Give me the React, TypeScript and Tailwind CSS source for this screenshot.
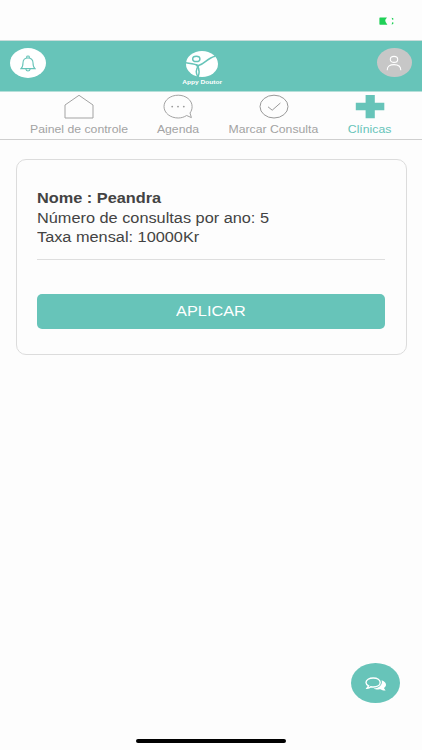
import React from "react";

const HomeIcon = () => (
    <svg width="30" height="26" viewBox="0 0 30 26" fill="none" stroke="#a3a3a3" strokeWidth="1">
        <path d="M1 11 L15 1.3 L29 11 V24 H1 Z"/>
    </svg>
);

const AgendaIcon = () => (
    <svg width="30" height="26" viewBox="0 0 30 26" fill="none" stroke="#a3a3a3" strokeWidth="1">
        <path d="M27 19 C28.4 17.1 29.1 15 29.1 12.5 C29.1 6.2 22.9 1.2 15.2 1.2 C7.3 1.2 1 6.2 1 12.5 C1 19 7.3 24 15.2 24 C18.4 24 21.3 23 23.6 21.5 L28.4 23.6 Z"/>
        <g fill="#999999" stroke="none">
            <circle cx="9.2" cy="12.6" r="0.9"/>
            <circle cx="15" cy="12.6" r="0.9"/>
            <circle cx="20.8" cy="12.6" r="0.9"/>
        </g>
    </svg>
);

const CheckIcon = () => (
    <svg width="30" height="26" viewBox="0 0 30 26" fill="none" stroke="#999999" strokeWidth="1">
        <ellipse cx="15" cy="12.6" rx="14" ry="11.4"/>
        <path d="M9 12.8 L13.2 16.2 L21.4 9"/>
    </svg>
);

const CrossIcon = () => (
    <svg width="30" height="26" viewBox="0 0 30 26" fill="#67c4b9">
        <path d="M10.6 1 H19.8 V8.8 H29.3 V16.2 H19.8 V24.2 H10.6 V16.2 H0.8 V8.8 H10.6 Z"/>
    </svg>
);

const navItems = [
    {title: "Painel de controle", icon: <HomeIcon/>, width: "w-[98px]", color: "text-[#a3a3a3]"},
    {title: "Agenda", icon: <AgendaIcon/>, width: "w-[42px]", color: "text-[#a3a3a3]"},
    {title: "Marcar Consulta", icon: <CheckIcon/>, width: "w-[90px]", color: "text-[#a3a3a3]"},
    {title: "Clínicas", icon: <CrossIcon/>, width: "w-[43px]", color: "text-[#67c4b9]"},
];

const Logo = () => (
    <div className="flex flex-col items-center pt-[10px] mr-[19px]">
        <svg width="32" height="26" viewBox="0 0 32 26" fill="none">
            <ellipse cx="16" cy="13" rx="16" ry="13" fill="#fff"/>
            <g stroke="#67c4b9" strokeWidth="1.5">
                <ellipse cx="10.3" cy="7.9" rx="3.6" ry="2.6"/>
                <path d="M0 11.8 C5 12.6 9.5 13 12.5 14.6 C18.5 13.2 21.5 6.8 29.2 5.2"/>
                <path d="M10.2 13.5 C13.4 17 13.8 21.5 12 26"/>
                <path d="M12.8 14.5 C9.8 18 9.8 22.5 12 26"/>
            </g>
        </svg>
        <p className="scale-x-[1.1] mt-[2px] text-[6px] leading-[7px] font-bold text-white whitespace-nowrap">Appy Doutor</p>
    </div>
);

const App = () => {
    return (
        <div className="relative w-full h-[750px] overflow-hidden bg-[#fdfdfd] font-['Liberation_Sans',Arial,sans-serif]">
            {/* Status bar */}
            <div className="h-[41px] flex justify-end pt-[17px] pr-[27px] border-b border-[#c9dcda]">
                <svg width="16" height="8" viewBox="0 0 16 8" fill="#1fd057">
                    <path d="M1 0.5 H8 L6.2 3 L6.6 5 L8.4 7.7 H1 Q0.4 7.7 0.4 7 V1.2 Q0.4 0.5 1 0.5 Z"/>
                    <path d="M12.6 0.8 L14.3 1.2 V2.8 H13.3 Z M13.3 5.3 H14.3 V6.9 L12.6 7.4 Z"/>
                </svg>
            </div>

            {/* Header */}
            <header className="h-[51px] flex items-start justify-between pl-[10px] pr-[10px] bg-[#67c4b9] border-b border-[#b5dfd9]">
                <div className="w-[36px] h-[30px] mt-[7px] rounded-[50%] bg-white flex justify-center items-center">
                    <svg width="16" height="17" viewBox="0 0 16 17" fill="none" stroke="#67c4b9" strokeWidth="1.1">
                        <path d="M1 13.6 C2.8 12.2 3 10.6 3 7.8 C3 4.8 5 3 8 3 C11 3 13 4.8 13 7.8 C13 10.6 13.2 12.2 15 13.6 Z"/>
                        <path d="M6.7 3 V1.7 Q6.7 1 8 1 Q9.3 1 9.3 1.7 V3 M5.8 14 Q6.3 16 8 16 Q9.7 16 10.2 14"/>
                    </svg>
                </div>
                <Logo/>
                <div className="w-[35px] h-[29px] mt-[7px] rounded-[50%] bg-[#c7c7c7] flex justify-center items-center">
                    <svg width="16" height="16" viewBox="0 0 16 16" fill="none" stroke="#fff" strokeWidth="1.1">
                        <ellipse cx="8" cy="4.4" rx="3.7" ry="3"/>
                        <path d="M1.2 15.2 C1.2 11.2 4 9.6 8 9.6 C12 9.6 14.8 11.2 14.8 15.2"/>
                    </svg>
                </div>
            </header>

            {/* Nav */}
            <nav className="h-[48px] flex justify-center gap-[29.5px] pt-[2px] pr-[1px] border-b border-[#cfcfcf]">
                {
                navItems.map((item, index) => (
                    <div key={index}
                        className={`${item.width} ${item.color} flex flex-col items-center`}>
                        {item.icon}
                        <p className="scale-x-[1.112] mt-[3px] text-[11px] leading-[13px] whitespace-nowrap">{item.title}</p>
                    </div>
                ))
            }
            </nav>

            {/* Clinic card */}
            <div className="ml-[15.5px] mr-[15.5px] mt-[19px] h-[196px] px-[20.5px] pt-[28px] rounded-[10px] border border-[#dcdcdc] text-[#434343] text-[14px]">
                <p className="w-fit scale-x-[1.1644] origin-left leading-[20px] font-bold">Nome : Peandra</p>
                <p className="w-fit scale-x-[1.1644] origin-left mt-[1px] leading-[19px]">Número de consultas por ano: 5</p>
                <p className="w-fit scale-x-[1.1644] origin-left leading-[19px]">Taxa mensal: 10000Kr</p>
                <hr className="mt-[12px] border-t-[1.5px] border-[#dedede]"/>
                <button className="block w-full h-[35px] mt-[34px] rounded-[5px] bg-[#67c4b9] text-white">
                    <span className="inline-block scale-x-[1.1644]">APLICAR</span>
                </button>
            </div>

            {/* Chat button */}
            <button className="absolute left-[351px] top-[663px] w-[49px] h-[40px] rounded-[50%] bg-[#67c4b9] flex justify-center items-center">
                <svg width="22" height="14" viewBox="0 0 22 14" className="mt-[2px]">
                    <path d="M16.6 3.2 C20 4.4 21.2 6.3 21 8 C20.8 9.4 19.9 10.4 18.9 11 L20.6 13.5 C18.4 13.6 16.8 13.1 15.5 12.3 C12.6 12.7 10 12.3 8.6 11.4 C14 11 17.9 8 16.6 3.2 Z" fill="#fff"/>
                    <path d="M8.3 1 C12.4 1 15.2 2.9 15.2 5.5 C15.2 8.1 12.4 10 8.3 10 C7.5 10 6.6 9.9 5.8 9.7 C4.7 10.7 3.4 11.2 2 11.3 L3.6 8.8 C2 8 1 6.9 1 5.5 C1 2.9 4.2 1 8.3 1 Z" fill="none" stroke="#fff" strokeWidth="1.4"/>
                </svg>
            </button>

            {/* Home indicator */}
            <div className="absolute left-[136px] top-[739px] w-[150px] h-[4px] rounded-full bg-black"></div>
        </div>
    )
}

export default App
